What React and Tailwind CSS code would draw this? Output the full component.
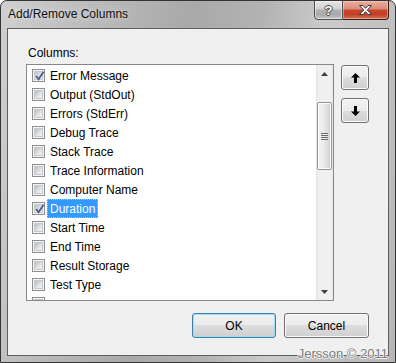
import React from 'react';

const items = [
  { label: 'Error Message', checked: true },
  { label: 'Output (StdOut)' },
  { label: 'Errors (StdErr)' },
  { label: 'Debug Trace' },
  { label: 'Stack Trace' },
  { label: 'Trace Information' },
  { label: 'Computer Name' },
  { label: 'Duration', checked: true, selected: true },
  { label: 'Start Time' },
  { label: 'End Time' },
  { label: 'Result Storage' },
  { label: 'Test Type' },
  { label: '' },
];

const btn =
  'flex items-center justify-center rounded-[3px] border border-[#707070] bg-[linear-gradient(to_bottom,#f2f2f2_0%,#ebebeb_50%,#dddddd_50%,#cfcfcf_100%)] shadow-[inset_0_0_0_1px_#fcfcfc]';

const CheckBox = ({ checked }) => (
  <div className="relative w-[13px] h-[13px] shrink-0 border border-[#8e8f8f] bg-[#f4f4f4] p-[1px]">
    <div className="w-full h-full border border-[#c6c8cb] bg-[linear-gradient(135deg,#b9bdc2_0%,#dfe1e3_55%,#f6f6f6_100%)]" />
    {checked && (
      <svg className="absolute left-[1px] top-[0px]" width="12" height="12" viewBox="0 0 12 12">
        <path d="M2.2 6 L4.6 9.2 L9.6 1.8" fill="none" stroke="#4c5d92" strokeWidth="1.9" />
      </svg>
    )}
  </div>
);

const Row = ({ label, checked, selected }) => (
  <div className="h-[19px] flex items-center pl-[5px] shrink-0">
    <CheckBox checked={checked} />
    {label && (
      <span
        className={
          'ml-[2px] h-[19px] px-[2px] leading-[18px] border border-dotted whitespace-nowrap ' +
          (selected ? 'bg-[#3399ff] text-white border-[#9ccbff]' : 'border-transparent text-[#000]')
        }
      >
        {label}
      </span>
    )}
  </div>
);

const Arrow = ({ down }) => (
  <svg width="9" height="10" viewBox="0 0 9 10" className={down ? 'rotate-180' : ''}>
    <polygon points="4.5,0 9,4.5 6,4.5 6,10 3,10 3,4.5 0,4.5" fill="#000" />
  </svg>
);

const Scrollbar = () => (
  <div className="w-[17px] flex flex-col bg-[linear-gradient(to_right,#e2e2e2_0%,#efefef_15%,#f1f1f1_85%,#e8e8e8_100%)]">
    <div className="h-[17px] flex items-center justify-center">
      <svg width="7" height="4" viewBox="0 0 7 4"><polygon points="3.5,0 7,4 0,4" fill="#404040" /></svg>
    </div>
    <div className="mt-[20px] mx-[1px] h-[68px] rounded-[2px] border border-[#979797] bg-[linear-gradient(to_right,#f4f4f4_0%,#ececec_40%,#d9d9d9_80%,#cfcfcf_100%)] shadow-[inset_0_0_0_1px_#fafafa] flex flex-col items-center justify-center gap-[1px]">
      <div className="w-[7px] h-[1px] bg-[#6e6e6e]" />
      <div className="w-[7px] h-[1px] bg-[#6e6e6e]" />
      <div className="w-[7px] h-[1px] bg-[#6e6e6e]" />
      <div className="w-[7px] h-[1px] bg-[#6e6e6e]" />
    </div>
    <div className="flex-1" />
    <div className="h-[17px] flex items-center justify-center">
      <svg width="7" height="4" viewBox="0 0 7 4"><polygon points="0,0 7,0 3.5,4" fill="#404040" /></svg>
    </div>
  </div>
);

export default function App() {
  return (
    <div className="w-[396px] h-[363px] bg-white font-['Liberation_Sans',Arial,sans-serif] text-[12px]">
      <div className="relative w-full h-full flex flex-col rounded-t-[7px] border border-[#343434] bg-[linear-gradient(100deg,#d0d0d0_0%,#bdbdbd_18%,#a9a9a9_42%,#b3b3b3_58%,#cbcbcb_72%,#b6b6b6_100%)] overflow-hidden">
        <div className="h-[27px] flex items-start justify-between shrink-0">
          <div className="pl-[7px] pt-[6px] leading-[15px] text-[#101010] [text-shadow:0_0_6px_rgba(255,255,255,0.7)]">
            Add/Remove Columns
          </div>
          <div className="flex -mt-[1px] mr-[6px]">
            <div className="w-[29px] h-[20px] flex items-center justify-center rounded-bl-[4px] border border-[#4f4f4f] bg-[linear-gradient(to_bottom,#e6e6e6_0%,#cfcfcf_45%,#b0b0b0_50%,#a9a9a9_75%,#c6c6c6_100%)] shadow-[inset_0_0_0_1px_rgba(255,255,255,0.5)]">
              <span className="font-bold text-[13px] leading-[13px] text-white [text-shadow:-1px_0_#4a4a4a,1px_0_#4a4a4a,0_-1px_#4a4a4a,0_1px_#4a4a4a]">?</span>
            </div>
            <div className="w-[46px] h-[20px] flex items-center justify-center rounded-br-[4px] border border-l-0 border-[#3f1d16] bg-[linear-gradient(to_bottom,#eab0a0_0%,#dc8a77_45%,#c8462f_50%,#c23e27_75%,#d8765b_100%)] shadow-[inset_0_0_0_1px_rgba(255,220,210,0.45)]">
              <svg width="13" height="10" viewBox="-0.5 -0.5 13 10">
                <polygon points="0,0 3.5,0 6,2.8 8.5,0 12,0 7.8,4.5 12,9 8.5,9 6,6.2 3.5,9 0,9 4.2,4.5" fill="#fff" stroke="#3b3b3b" strokeWidth="1" />
              </svg>
            </div>
          </div>
        </div>

        <div className="flex-1 flex px-[6px] pb-[6px]">
          <div className="flex-1 flex flex-col border border-[#5e5e5e] bg-[#f0f0f0] pl-[18px] pr-[19px] pt-[17px]">
            <div className="h-[18px] leading-[15px] ml-[2px] text-[#000]">Columns:</div>
            <div className="flex items-start">
              <div className="w-[308px] h-[237px] border border-[#828790] bg-white flex">
                <div className="flex-1 flex flex-col overflow-hidden pt-[1px]">
                  {items.map((it, i) => (
                    <Row key={i} {...it} />
                  ))}
                </div>
                <Scrollbar />
              </div>
              <div className="ml-[7px] mt-[1px] flex flex-col gap-[8px]">
                <div className={btn + ' w-[28px] h-[25px]'}><Arrow /></div>
                <div className={btn + ' w-[28px] h-[25px]'}><Arrow down /></div>
              </div>
            </div>
            <div className="mt-[12px] flex justify-end gap-[8px]">
              <div className="w-[84px] h-[25px] flex items-center justify-center rounded-[3px] border border-[#3c7fb1] bg-[linear-gradient(to_bottom,#f2f2f2_0%,#ebebeb_50%,#dddddd_50%,#cfcfcf_100%)] shadow-[inset_0_0_0_1px_#9fdcf6]">
                OK
              </div>
              <div className={btn + ' w-[85px] h-[25px]'}>Cancel</div>
            </div>
          </div>
        </div>

        <div className="absolute right-[7px] bottom-[1px] text-[13px] leading-[15px] text-[#7c7c7c] [text-shadow:-1px_0_#f4f4f4,1px_0_#f4f4f4,0_-1px_#f4f4f4,0_1px_#f4f4f4]">
          Jersson © 2011
        </div>
      </div>
    </div>
  );
}
